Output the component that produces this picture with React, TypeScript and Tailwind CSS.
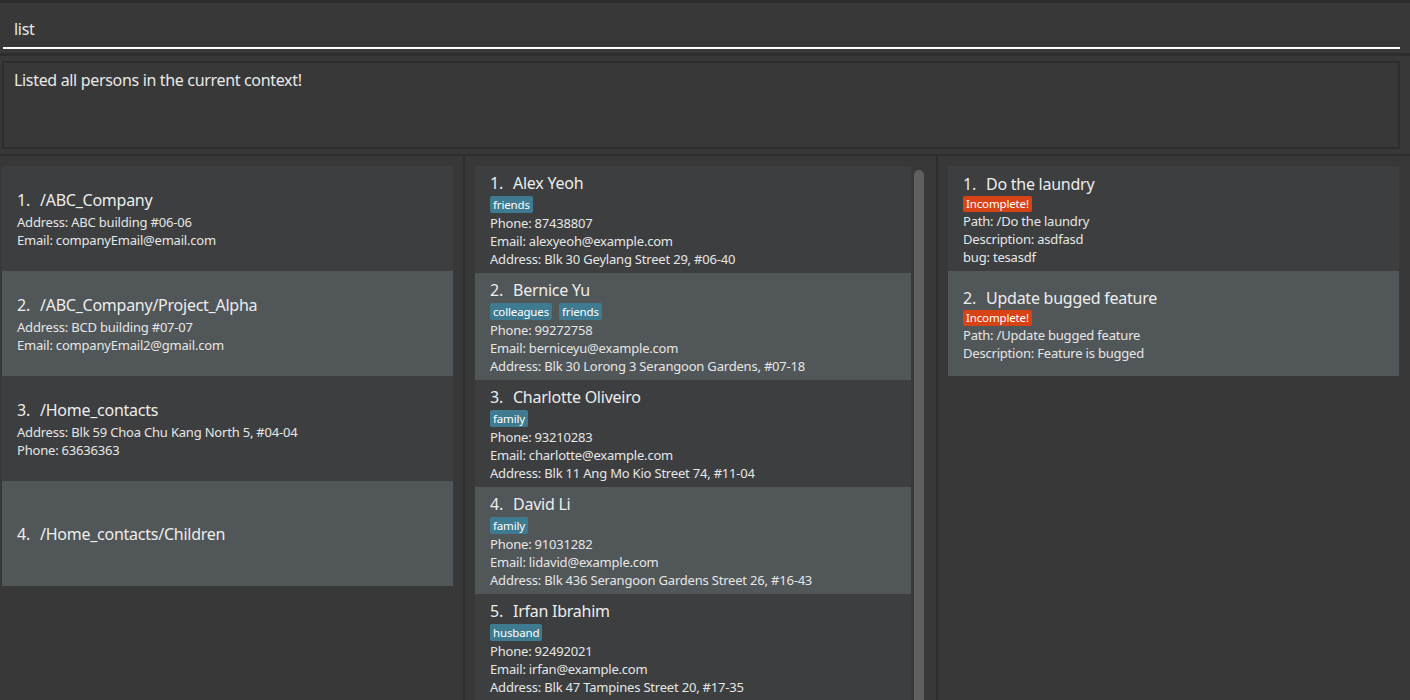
import React from 'react';

interface Folder {
  path: string;
  lines: string[];
}

interface Person {
  name: string;
  tags: string[];
  phone: string;
  email: string;
  address: string;
}

interface Task {
  title: string;
  lines: string[];
}

const folders: Folder[] = [
  { path: '/ABC_Company', lines: ['Address: ABC building #06-06', 'Email: companyEmail@email.com'] },
  { path: '/ABC_Company/Project_Alpha', lines: ['Address: BCD building #07-07', 'Email: companyEmail2@gmail.com'] },
  { path: '/Home_contacts', lines: ['Address: Blk 59 Choa Chu Kang North 5, #04-04', 'Phone: 63636363'] },
  { path: '/Home_contacts/Children', lines: [] },
];

const persons: Person[] = [
  { name: 'Alex Yeoh', tags: ['friends'], phone: '87438807', email: 'alexyeoh@example.com', address: 'Blk 30 Geylang Street 29, #06-40' },
  { name: 'Bernice Yu', tags: ['colleagues', 'friends'], phone: '99272758', email: 'berniceyu@example.com', address: 'Blk 30 Lorong 3 Serangoon Gardens, #07-18' },
  { name: 'Charlotte Oliveiro', tags: ['family'], phone: '93210283', email: 'charlotte@example.com', address: 'Blk 11 Ang Mo Kio Street 74, #11-04' },
  { name: 'David Li', tags: ['family'], phone: '91031282', email: 'lidavid@example.com', address: 'Blk 436 Serangoon Gardens Street 26, #16-43' },
  { name: 'Irfan Ibrahim', tags: ['husband'], phone: '92492021', email: 'irfan@example.com', address: 'Blk 47 Tampines Street 20, #17-35' },
];

const tasks: Task[] = [
  { title: 'Do the laundry', lines: ['Path: /Do the laundry', 'Description: asdfasd', 'bug: tesasdf'] },
  { title: 'Update bugged feature', lines: ['Path: /Update bugged feature', 'Description: Feature is bugged'] },
];

const font = "font-['Noto_Sans','Open_Sans',sans-serif]";

function Title({ n, text }: { n: number; text: string }) {
  return (
    <div className="flex text-[16px] leading-[20px] tracking-[-0.25px] text-[#ededed]">
      <span className="w-[23px]">{n}.</span>
      <span>{text}</span>
    </div>
  );
}

export default function App() {
  return (
    <div className={`${font} w-[1410px] h-[700px] overflow-hidden bg-[#383838] flex flex-col`}>
      {/* command box */}
      <div className="border-t-[3px] border-[#2d2d2d] h-[53px] shrink-0 px-[3px] pt-[15px]">
        <div className="border-b-2 border-white w-[1397px] h-[31px] pl-[11px] text-[16px] leading-[22px] tracking-[-0.3px] text-[#e8e8e8]">list</div>
      </div>

      {/* result display */}
      <div className="border-t-[3px] border-[#2d2d2d] h-[101px] shrink-0 pt-[5px] px-[2px]">
        <div className="border-2 border-[#2e2e2e] w-[1398px] h-[88px] px-[10px] pt-[6px] text-[16px] leading-[22px] tracking-[-0.33px] text-[#e8e8e8]">
          Listed all persons in the current context!
        </div>
      </div>

      {/* lists */}
      <div className="border-t-2 border-[#2d2d2d] flex-1 flex min-h-0">
        <div className="w-[463px] shrink-0 pt-[10px] pl-[2px]">
          {folders.map((f, i) => (
            <div
              key={f.path}
              className={`w-[451px] h-[105px] flex flex-col justify-center pl-[15px] ${f.lines.length > 0 ? 'pt-[2px]' : ''} ${i % 2 === 0 ? 'bg-[#3c3e3f]' : 'bg-[#515658]'}`}
            >
              <Title n={i + 1} text={f.path} />
              {f.lines.length > 0 && (
                <div className="mt-[3px] text-[13px] leading-[18px] tracking-[-0.2px] text-[#e6e6e6]">
                  {f.lines.map(l => (
                    <div key={l}>{l}</div>
                  ))}
                </div>
              )}
            </div>
          ))}
        </div>

        <div className="w-[2px] bg-[#2d2d2d] shrink-0" />

        <div className="w-[471px] shrink-0 pt-[10px] pl-[10px] flex">
          <div className="w-[436px] shrink-0">
            {persons.map((p, i) => (
              <div
                key={p.name}
                className={`h-[107px] pl-[15px] pt-[7px] ${i % 2 === 0 ? 'bg-[#3c3e3f]' : 'bg-[#515658]'}`}
              >
                <Title n={i + 1} text={p.name} />
                <div className="flex gap-[7px] mt-[3px]">
                  {p.tags.map(t => (
                    <span key={t} className="bg-[#3e7b91] text-white text-[11.5px] leading-[17px] tracking-[-0.15px] px-[3px] rounded-[2px]">{t}</span>
                  ))}
                </div>
                <div className="text-[13px] leading-[18px] tracking-[-0.2px] text-[#e6e6e6] mt-[1px]">
                  <div>Phone: {p.phone}</div>
                  <div>Email: {p.email}</div>
                  <div>Address: {p.address}</div>
                </div>
              </div>
            ))}
          </div>
          <div className="ml-[3px] mt-[4px] w-[10px] h-[600px] rounded-[5px] bg-[#5f5f5f] shrink-0" />
        </div>

        <div className="w-[2px] bg-[#2d2d2d] shrink-0" />

        <div className="flex-1 pt-[10px] pl-[10px] pr-[11px]">
          {tasks.map((t, i) => (
            <div
              key={t.title}
              className={`h-[105px] flex flex-col justify-center pl-[15px] pt-[3px] ${i % 2 === 0 ? 'bg-[#3c3e3f]' : 'bg-[#515658]'}`}
            >
              <Title n={i + 1} text={t.title} />
              <div className="flex mt-[2px]">
                <span className="bg-[#d84315] text-white text-[11.5px] leading-[16px] tracking-[-0.15px] px-[3px] rounded-[2px]">Incomplete!</span>
              </div>
              <div className="text-[13px] leading-[18px] tracking-[-0.2px] text-[#e6e6e6]">
                {t.lines.map(l => (
                  <div key={l}>{l}</div>
                ))}
              </div>
            </div>
          ))}
        </div>
      </div>
    </div>
  );
}
